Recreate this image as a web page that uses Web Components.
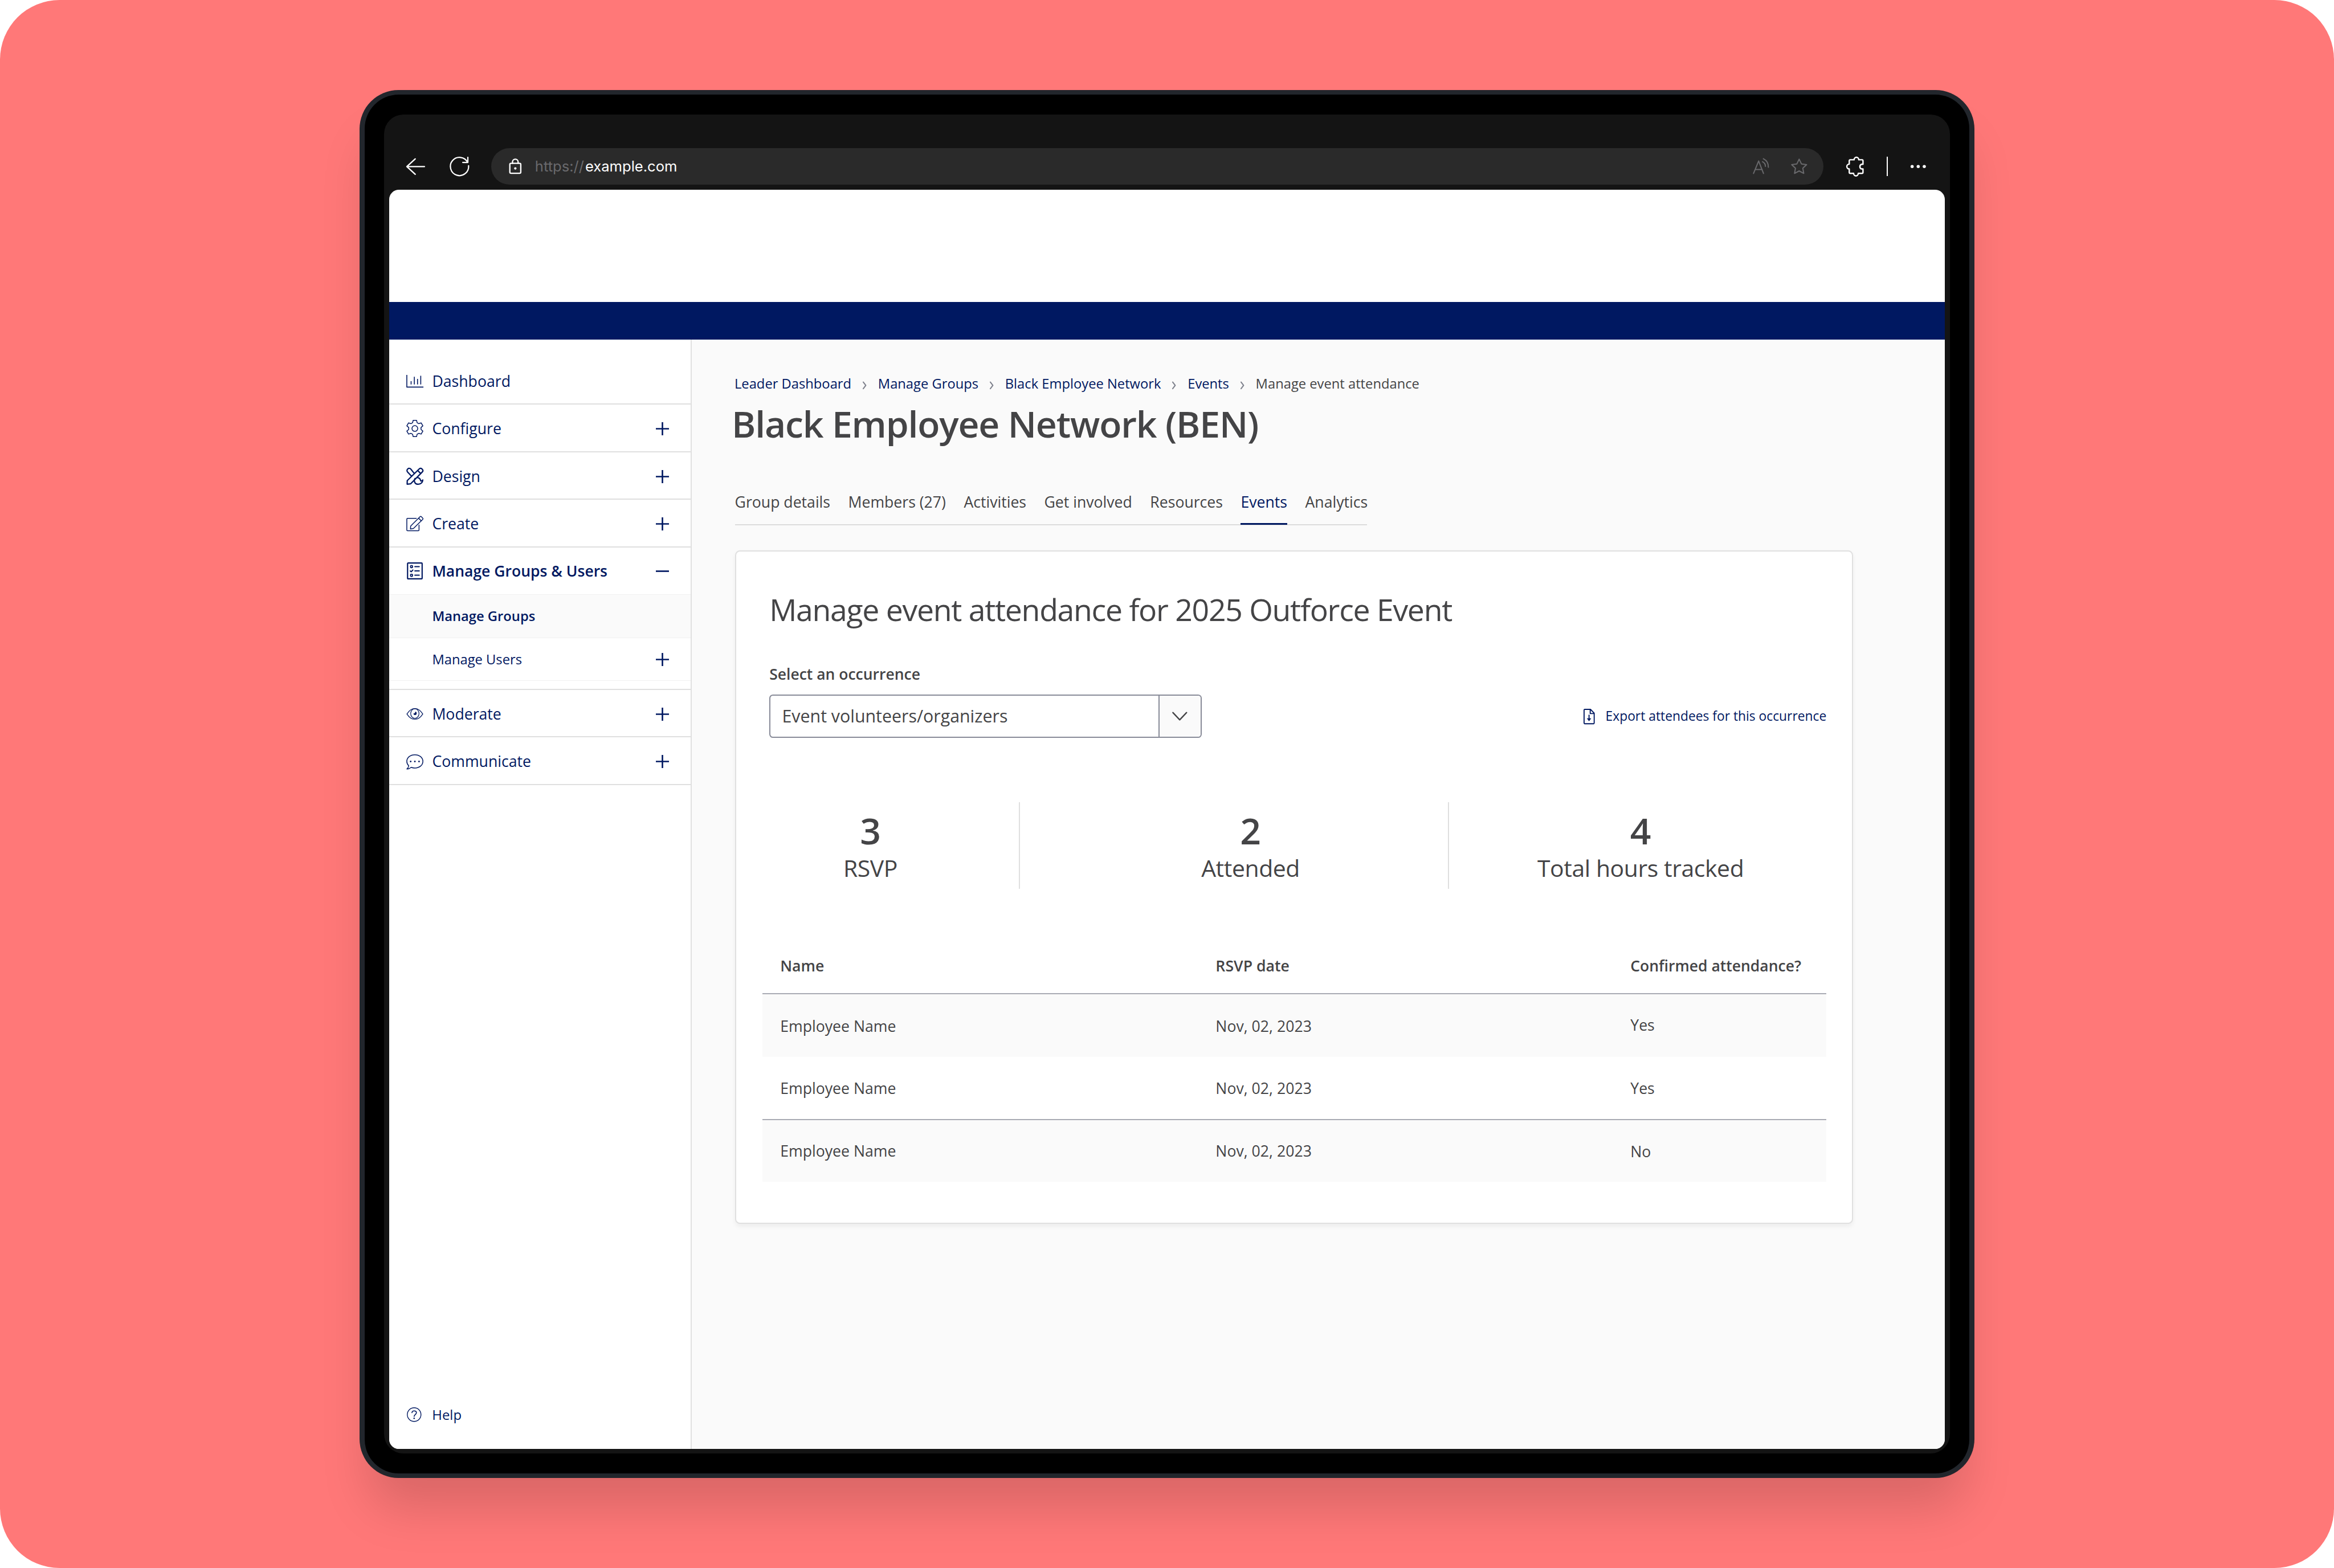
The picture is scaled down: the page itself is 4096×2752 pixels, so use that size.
<!DOCTYPE html>
<html lang="en">
<head>
<meta charset="utf-8">
<title>Manage event attendance</title>
<style>
  /* 1rem = 10 units of the layout */
  html { font-size: 21.3333px; }
  body {
    margin: 0;
    background: #fff;
    font-family: "Open Sans", "Noto Sans", sans-serif;
    color: #444446;
  }
</style>
</head>
<body>

<app-stage>
  <device-frame>
    <browser-bar slot="bar" scheme="https://">example.com</browser-bar>

    <side-nav slot="nav">
      <nav-item icon="chart">Dashboard</nav-item>
      <nav-item icon="gear" toggle="plus">Configure</nav-item>
      <nav-item icon="design" toggle="plus">Design</nav-item>
      <nav-item icon="edit" toggle="plus">Create</nav-item>
      <nav-item icon="list" toggle="minus" open>Manage Groups &amp; Users</nav-item>
      <nav-item sub current>Manage Groups</nav-item>
      <nav-item sub toggle="plus">Manage Users</nav-item>
      <nav-gap></nav-gap>
      <nav-item icon="eye" toggle="plus">Moderate</nav-item>
      <nav-item icon="chat" toggle="plus">Communicate</nav-item>
      <help-link slot="footer">Help</help-link>
    </side-nav>

    <crumb-trail>
      <a>Leader Dashboard</a>
      <a>Manage Groups</a>
      <a>Black Employee Network</a>
      <a>Events</a>
      <span>Manage event attendance</span>
    </crumb-trail>
    <page-title>Black Employee Network (BEN)</page-title>
    <tab-strip>
      <span>Group details</span>
      <span>Members (27)</span>
      <span>Activities</span>
      <span>Get involved</span>
      <span>Resources</span>
      <span class="active">Events</span>
      <span>Analytics</span>
    </tab-strip>

    <event-card>
      <span slot="heading">Manage event attendance for 2025 Outforce Event</span>
      <select-field slot="field" label="Select an occurrence">Event volunteers/organizers</select-field>
      <export-link slot="action">Export attendees for this occurrence</export-link>
      <stat-block slot="stats" value="3">RSVP</stat-block>
      <stat-block slot="stats" value="2">Attended</stat-block>
      <stat-block slot="stats" value="4">Total hours tracked</stat-block>
      <attendance-table></attendance-table>
    </event-card>
  </device-frame>
</app-stage>

<script>
const ICONS = {
  // browser icons, 20 x 20
  back: `<path d="M17.3 10H2.8M9.7 3.7 2.8 10l6.9 6.4" stroke-width="1.1"/>`,
  reload: `<path d="M17.5 9.3A7.5 7.5 0 1 1 16.7 6.5M16.9 2.4v4.2h-4.2" stroke-width="1.05"/>`,
  lock: `<rect x="5.5" y="7.3" width="9" height="8.2" rx="1" stroke-width="1.1"/><path d="M7.7 7.3V6.2a2.3 2.3 0 0 1 4.6 0v1.1" stroke-width="1.1"/><circle cx="10" cy="11.5" r="1" fill="currentColor" stroke="none"/>`,
  read: `<path d="M3.9 15.7 8.1 5.4l4 10.3M5.3 12.4h5.7M12 3.6c2.6 1.3 4.2 4 4.1 7M11.3 6c1.6.8 2.4 2.2 2.4 3.8" stroke-width=".95"/>`,
  star: `<path d="M10.02 3.9 11.9 7.8l4.25.6-3.1 3 .75 4.2-3.78-2-3.78 2 .75-4.2-3.1-3 4.25-.6Z" stroke-width=".95"/>`,
  puzzle: `<path d="M5.3 8V5.2a.8.8 0 0 1 .8-.8h3.2a1.9 2.1 0 0 1 3.8 0h2.7a.8.8 0 0 1 .8.8v2.9h-1a2 2 0 0 0 0 3.9h1v2.8a.8.8 0 0 1-.8.8h-3.1a1.9 2.1 0 0 1-3.8 0H6.1a.8.8 0 0 1-.8-.8V12a2 2 0 0 1 0-4Z" stroke-width="1.15"/>`,
  dots: `<g fill="currentColor" stroke="none"><circle cx="5" cy="10" r="1.3"/><circle cx="10" cy="10" r="1.3"/><circle cx="15" cy="10" r="1.3"/></g>`,
  // app icons, 16 x 16
  chart: `<path d="M.5 2.1v11.4H16M4.5 8v3M7.5 3.9V11M10.5 5.9V11M13.5 2.9V11" stroke-width=".85" stroke-linecap="butt"/>`,
  gear: `<path d="M5.9 2.6 6.4.4h3.2l.5 2.2 1.53.88 2.24-.72 1.6 2.78-1.74 1.58v1.76l1.74 1.58-1.6 2.78-2.24-.72-1.53.88-.5 2.2H6.4l-.5-2.2-1.53-.88-2.24.72-1.6-2.78 1.74-1.58V7.12L.53 5.54l1.6-2.78 2.24.72Z" stroke-width=".8"/><circle cx="8" cy="8" r="2.7" stroke-width=".8"/>`,
  design: `<path d="M.8 15.3.9 12 12.2.95a1.7 1.7 0 0 1 2.3.05l.5.5a1.7 1.7 0 0 1 .05 2.3L4 15Z M10.7 2.6l2.8 2.8M4.9 7.9 1.1 3.8A1.9 1.9 0 0 1 4.3 1.3L7.3 5.1M8.2 10c-.7.8-.8 2-.4 3.3.5 1.4 1.8 2.1 3.4 2.1 2.4 0 4.1-1.7 4.2-4-.6.8-1.2 1.1-1.9.9-.3-1.7-1.2-2.9-2.7-3.1" stroke-width="1.2"/>`,
  edit: `<path d="M9.4 3.1H1.2a.7.7 0 0 0-.7.7v10.1c0 .4.3.7.7.7h10c.4 0 .7-.3.7-.7V9.3M3.9 13l.2-2.8 8.8-8.7a.8.8 0 0 1 1.1 0l1.4 1.4a.8.8 0 0 1 0 1.1l-8.7 8.5ZM11.6 3l2.4 2.5" stroke-width=".8"/>`,
  list: `<rect x="1.2" y=".6" width="13.6" height="14.8" rx=".5" stroke-width="1.15"/><rect x="4" y="3" width="1.8" height="1.9" rx=".5" stroke-width="1"/><rect x="4" y="11.1" width="1.8" height="1.9" rx=".5" stroke-width="1"/><path d="M3.7 8l.9.8 1.6-1.7M8 4h4.1M8 8h4.1M8 12h4.1" stroke-width="1.05"/>`,
  eye: `<path d="M.6 8C2.5 5 5 3 8 3s5.500 2 7.400 5C13.500 11 11 13 8 13S2.500 11 .6 8Z" stroke-width=".7"/><ellipse cx="8" cy="7.6" rx="3.9" ry="4.500" stroke-width=".65"/><path d="M8.400 5.900A1.500 1.600 0 1 1 6.700 7.500c.9.3 1.700-.4 1.700-1.600Z" fill="currentColor" stroke="none"/>`,
  chat: `<path d="M2.300 11.700A6.900 6.100 0 0 1 .5 7.600C.5 4 3.800 1.400 8 1.400s7.500 2.600 7.500 6.200-3.300 6.200-7.500 6.200c-1.200 0-2.400-.2-3.400-.6-1 .9-2.300 1.500-4 1.500 1-1 1.600-2 1.700-3Z" stroke-width=".8"/><g fill="currentColor" stroke="none"><circle cx="4.1" cy="7.7" r=".75"/><circle cx="8" cy="7.7" r=".75"/><circle cx="11.9" cy="7.7" r=".75"/></g>`,
  help: `<circle cx="8" cy="8" r="7.500" stroke-width=".85"/><path d="M5.600 5.900c.1-1.300 1.100-2 2.400-2 1.400 0 2.500.8 2.500 2.100C10.500 7.800 8 8 8 10" stroke-width="1"/><circle cx="8" cy="12" r=".8" fill="currentColor" stroke="none"/>`,
  file: `<path d="M2.900 1.300c0-.4.3-.7.700-.7h6l3.700 3.900v10.200c0 .4-.3.700-.7.700h-9a.7.7 0 0 1-.7-.7ZM9.200.8v4.100h4" stroke-width="1.100"/><path d="M8 6.600v5" stroke-width="1.100"/><path d="M5.700 9.800 8 12.700l2.300-2.900Z" fill="currentColor" stroke="none"/>`,
  plus: `<path d="M8 0v16M0 8h16" stroke-width="1.850" stroke-linecap="butt"/>`,
  minus: `<path d="M0 8h16" stroke-width="1.850" stroke-linecap="butt"/>`,
  down: `<path d="M.8 4 8 11.600 15.200 4" stroke-width="1.400"/>`,
  next: `<path d="M5 .8 10.500 8 5 15.200" stroke-width="2.600"/>`
};
const SIZE20 = ['back', 'reload', 'lock', 'read', 'star', 'puzzle', 'dots'];

// shared base: clones the class template into an open shadow root
class BaseElement extends HTMLElement {
  constructor() {
    super();
    const template = document.createElement('template');
    template.innerHTML = this.render();
    this.attachShadow({mode: 'open'}).appendChild(template.content.cloneNode(true));
  }
}

class AppIcon extends BaseElement {
  render() {
    const name = this.getAttribute('name');
    const box = SIZE20.includes(name) ? 20 : 16;
    return `
      <style>
        :host { display: block; flex: none; width: 1.41rem; height: 1.41rem; }
        svg { display: block; width: 100%; height: 100%; overflow: visible; }
      </style>
      <svg viewBox="0 0 ${box} ${box}" fill="none" stroke="currentColor" stroke-linecap="round" stroke-linejoin="round">${ICONS[name]}</svg>`;
  }
}

class AppStage extends BaseElement {
  render() {
    return `
      <style>
        :host {
          display: flex; justify-content: center; align-items: flex-start;
          box-sizing: border-box; width: 4096px; height: 2752px; padding-top: 7.4rem;
          background: #ff7878; border-radius: 4.9rem; overflow: hidden;
        }
      </style>
      <slot></slot>`;
  }
}

class DeviceFrame extends BaseElement {
  render() {
    return `
      <style>
        :host {
          display: block; box-sizing: border-box; width: 132.8rem; height: 114.2rem;
          padding: .4rem; border-radius: 3.2rem; background: #22262c;
          box-shadow: 0 3.2rem 4rem -.8rem rgba(0, 0, 0, .15);
        }
        .bezel { box-sizing: border-box; height: 100%; padding: 1.6rem; border-radius: 2.8rem; background: #000; }
        .screen {
          display: flex; flex-direction: column; box-sizing: border-box; height: 100%;
          padding: 0 .4rem .4rem; border-radius: 1.6rem; background: #141414;
        }
        .page {
          flex: 1; min-height: 0; display: flex; flex-direction: column;
          border-radius: .8rem; background: #fff; overflow: hidden;
        }
        .top { flex: none; height: 9.25rem; }
        .band { flex: none; height: 3.1rem; background: #001861; }
        .body { flex: 1; display: flex; min-height: 0; }
        main { flex: 1; background: #fafafa; padding: 2.62rem 0 0 3.53rem; }
      </style>
      <div class="bezel">
        <div class="screen">
          <slot name="bar"></slot>
          <div class="page">
            <div class="top"></div>
            <div class="band"></div>
            <div class="body">
              <slot name="nav"></slot>
              <main><slot></slot></main>
            </div>
          </div>
        </div>
      </div>`;
  }
}

class BrowserBar extends BaseElement {
  render() {
    return `
      <style>
        :host {
          flex: none; display: flex; align-items: center; gap: 1.6rem; box-sizing: border-box;
          height: 6.2rem; padding: 2.4rem 1.2rem 0; color: #fff;
        }
        app-icon { width: 2rem; height: 2rem; }
        .address {
          flex: 1; display: flex; align-items: center; box-sizing: border-box; height: 3rem;
          padding: 0 1rem; border-radius: 1.5rem; background: #2a2a2a;
          font: 400 1.2rem/1.6rem Inter, sans-serif;
        }
        .url { flex: 1; padding-left: .61rem; white-space: nowrap; }
        .url span { margin-right: .09rem; }
        .url span, .address .dim { color: #69696c; }
        .dim + .dim { margin-left: 1.15rem; }
        .rule { width: .1rem; height: 1.6rem; margin-right: -.1rem; background: #fff; }
      </style>
      <app-icon name="back"></app-icon>
      <app-icon name="reload"></app-icon>
      <div class="address">
        <app-icon name="lock"></app-icon>
        <div class="url"><span>${this.getAttribute('scheme')}</span><slot></slot></div>
        <app-icon class="dim" name="read"></app-icon>
        <app-icon class="dim" name="star"></app-icon>
      </div>
      <app-icon name="puzzle"></app-icon>
      <div class="rule"></div>
      <app-icon name="dots"></app-icon>`;
  }
}

class SideNav extends BaseElement {
  render() {
    return `
      <style>
        :host {
          flex: none; display: flex; flex-direction: column; box-sizing: border-box;
          width: 24.92rem; padding-top: 1.43rem; background: #fff;
          border-right: 2px solid #e0e0e0; color: #001861;
        }
        .footer { margin-top: auto; padding-bottom: 1.8rem; }
      </style>
      <slot></slot>
      <div class="footer"><slot name="footer"></slot></div>`;
  }
}

class NavItem extends BaseElement {
  render() {
    const icon = this.getAttribute('icon');
    const toggle = this.getAttribute('toggle');
    return `
      <style>
        :host {
          display: flex; align-items: center; box-sizing: border-box; height: 3.915rem;
          padding: .14rem 1.8rem 0 1.42rem; border-bottom: 2px solid #dfdfdf;
          font-size: 1.25rem; line-height: 1; white-space: nowrap;
        }
        :host([open]) { height: 3.88rem; padding-top: .08rem; font-weight: 600; font-size: 1.244rem; border-bottom: 1px solid #f0f0f0; }
        :host([sub]) { height: 3.56rem; padding-top: .04rem; font-size: 1.113rem; border-bottom: 1px solid #f0f0f0; }
        :host([current]) { font-weight: 600; background: #fafafa; }
        .label { flex: 1; padding-left: .72rem; }
        :host([sub]) .label { padding-left: 2.13rem; }
        .toggle { width: 1.08rem; height: 1.08rem; }
      </style>
      ${icon ? `<app-icon name="${icon}"></app-icon>` : ''}
      <div class="label"><slot></slot></div>
      ${toggle ? `<app-icon class="toggle" name="${toggle}"></app-icon>` : ''}`;
  }
}

class NavGap extends BaseElement {
  render() {
    return `<style>:host { display: block; box-sizing: border-box; height: .72rem; border-bottom: 2px solid #dfdfdf; }</style>`;
  }
}

class HelpLink extends BaseElement {
  render() {
    return `
      <style>
        :host { display: flex; align-items: center; height: 2rem; padding-left: 1.45rem; font-size: 1.12rem; line-height: 1; }
        app-icon { width: 1.2rem; height: 1.2rem; margin-right: .9rem; }
      </style>
      <app-icon name="help"></app-icon><slot></slot>`;
  }
}

class CrumbTrail extends BaseElement {
  connectedCallback() {
    // a chevron goes before every crumb but the first
    [...this.children].forEach((crumb, i) => {
      if (i === 0) return;
      const sep = document.createElement('app-separator');
      this.insertBefore(sep, crumb);
    });
  }
  render() {
    return `
      <style>
        :host { display: flex; align-items: center; height: 2rem; margin-left: -.03rem; font-size: 1.113rem; line-height: 1; white-space: nowrap; }
        ::slotted(a) { color: #001861; }
      </style>
      <slot></slot>`;
  }
}

class AppSeparator extends BaseElement {
  render() {
    return `
      <style>
        :host { display: flex; justify-content: center; width: 2.19rem; color: #7f828d; }
        app-icon { width: .6rem; height: .6rem; margin-top: .3rem; }
      </style>
      <app-icon name="next"></app-icon>`;
  }
}

class PageTitle extends BaseElement {
  render() {
    return `
      <style>
        :host {
          display: block; height: 4rem; margin: .27rem 0 2.66rem -.26rem;
          font-size: 3.01rem; font-weight: 600; letter-spacing: -.054rem; line-height: 4rem; white-space: nowrap;
        }
      </style>
      <slot></slot>`;
  }
}

class TabStrip extends BaseElement {
  render() {
    return `
      <style>
        :host {
          display: flex; gap: 1.475rem; box-sizing: border-box; width: 52.02rem; height: 3.74rem;
          border-bottom: 2px solid #dcdcdc; font-size: 1.249rem; line-height: 3.58rem; white-space: nowrap;
        }
        ::slotted(.active) { box-sizing: border-box; height: 3.66rem; color: #001861; border-bottom: .18rem solid #001861; }
      </style>
      <slot></slot>`;
  }
}

class EventCard extends BaseElement {
  render() {
    return `
      <style>
        :host {
          display: block; box-sizing: border-box; width: 91.97rem; height: 55.38rem; margin: 2.06rem 0 0 .03rem;
          padding: 2.97rem 2.11rem 0 2.17rem; background: #fff; border: 2px solid #e0e0e0; border-radius: .4rem;
          box-shadow: 0 .2rem .4rem rgba(0, 0, 0, .05);
        }
        .heading { height: 3.6rem; padding-left: .55rem; font-size: 2.51rem; letter-spacing: -.06rem; line-height: 3.6rem; white-space: nowrap; }
        .row { display: flex; justify-content: space-between; align-items: flex-end; margin-top: 2.72rem; padding-left: .55rem; }
        .stats {
          display: grid; grid-template-columns: 16.64rem 7.88rem 30.14rem 2.44rem 29.16rem;
          height: 7.11rem; margin-top: 5.3rem; padding-left: .54rem;
        }
        .line { width: 2px; margin: 0 auto; background: #dfdfdf; grid-row: 1; }
        .line.first { grid-column: 2; }
        .line.second { grid-column: 4; }
        ::slotted(stat-block) { grid-row: 1; }
        ::slotted(stat-block:nth-of-type(1)) { grid-column: 1; }
        ::slotted(stat-block:nth-of-type(2)) { grid-column: 3; }
        ::slotted(stat-block:nth-of-type(3)) { grid-column: 5; }
      </style>
      <div class="heading"><slot name="heading"></slot></div>
      <div class="row"><slot name="field"></slot><slot name="action"></slot></div>
      <div class="stats">
        <div class="line first"></div>
        <div class="line second"></div>
        <slot name="stats"></slot>
      </div>
      <slot></slot>`;
  }
}

class SelectField extends BaseElement {
  render() {
    return `
      <style>
        :host { display: block; width: 35.56rem; white-space: nowrap; }
        label { display: block; height: 1.6rem; margin-bottom: .88rem; font-size: 1.242rem; font-weight: 600; line-height: 1.6rem; }
        .box { display: flex; box-sizing: border-box; height: 3.55rem; border: 2px solid #888b98; border-radius: .3rem; overflow: hidden; }
        .value { flex: 1; padding-left: .95rem; font-size: 1.423rem; line-height: 3.34rem; }
        .arrow { display: flex; align-items: center; justify-content: center; box-sizing: border-box; width: 3.48rem; background: #fafafa; border-left: 2px solid #888b98; }
        app-icon { width: 1.25rem; height: 1.25rem; }
      </style>
      <label>${this.getAttribute('label')}</label>
      <div class="box">
        <div class="value"><slot></slot></div>
        <div class="arrow"><app-icon name="down"></app-icon></div>
      </div>`;
  }
}

class ExportLink extends BaseElement {
  render() {
    return `
      <style>
        :host { display: flex; align-items: center; height: 3.53rem; color: #001861; font-size: 1.069rem; line-height: 1; white-space: nowrap; }
        app-icon { width: 1.28rem; height: 1.28rem; margin-right: .72rem; }
      </style>
      <app-icon name="file"></app-icon><slot></slot>`;
  }
}

class StatBlock extends BaseElement {
  render() {
    return `
      <style>
        :host { display: block; padding-top: .3rem; text-align: center; white-space: nowrap; }
        b { display: block; height: 4rem; font-size: 3.01rem; font-weight: 600; line-height: 4rem; }
        div { margin-top: -.07rem; font-size: 1.92rem; line-height: 2.4rem; letter-spacing: -.02rem; }
      </style>
      <b>${this.getAttribute('value')}</b>
      <div><slot></slot></div>`;
  }
}

class AttendanceTable extends BaseElement {
  render() {
    const rows = [
      ['Employee Name', 'Nov, 02, 2023', 'Yes'],
      ['Employee Name', 'Nov, 02, 2023', 'Yes'],
      ['Employee Name', 'Nov, 02, 2023', 'No']
    ];
    return `
      <style>
        :host { display: block; margin-top: 4.02rem; font-size: 1.25rem; line-height: 1; white-space: nowrap; }
        .row { display: grid; grid-template-columns: 35.82rem 34.12rem auto; align-items: center; box-sizing: border-box; height: 5.16rem; padding: .1rem 0 0 1.44rem; }
        .head { height: 4.68rem; padding-top: .1rem; font-weight: 600; border-bottom: 2px solid #a9abb3; }
        .row:nth-child(odd) { border-bottom: 2px solid #a9abb3; }
        .row:nth-child(even) { background: #fafafa; }
        .row:last-child { height: 5.07rem; padding-top: .04rem; }
        .head span:last-child { font-size: 1.243rem; }
        .row:nth-child(2) span:last-child { padding-bottom: .24rem; }
        .row:last-child span:last-child { padding-top: .14rem; }
      </style>
      <div class="body">
        <div class="row head"><span>Name</span><span>RSVP date</span><span>Confirmed attendance?</span></div>
        ${rows.map(r => `<div class="row">${r.map(c => `<span>${c}</span>`).join('')}</div>`).join('')}
      </div>`;
  }
}

customElements.define('app-icon', AppIcon);
customElements.define('app-separator', AppSeparator);
customElements.define('app-stage', AppStage);
customElements.define('device-frame', DeviceFrame);
customElements.define('browser-bar', BrowserBar);
customElements.define('side-nav', SideNav);
customElements.define('nav-item', NavItem);
customElements.define('nav-gap', NavGap);
customElements.define('help-link', HelpLink);
customElements.define('crumb-trail', CrumbTrail);
customElements.define('page-title', PageTitle);
customElements.define('tab-strip', TabStrip);
customElements.define('event-card', EventCard);
customElements.define('select-field', SelectField);
customElements.define('export-link', ExportLink);
customElements.define('stat-block', StatBlock);
customElements.define('attendance-table', AttendanceTable);
</script>
</body>
</html>
